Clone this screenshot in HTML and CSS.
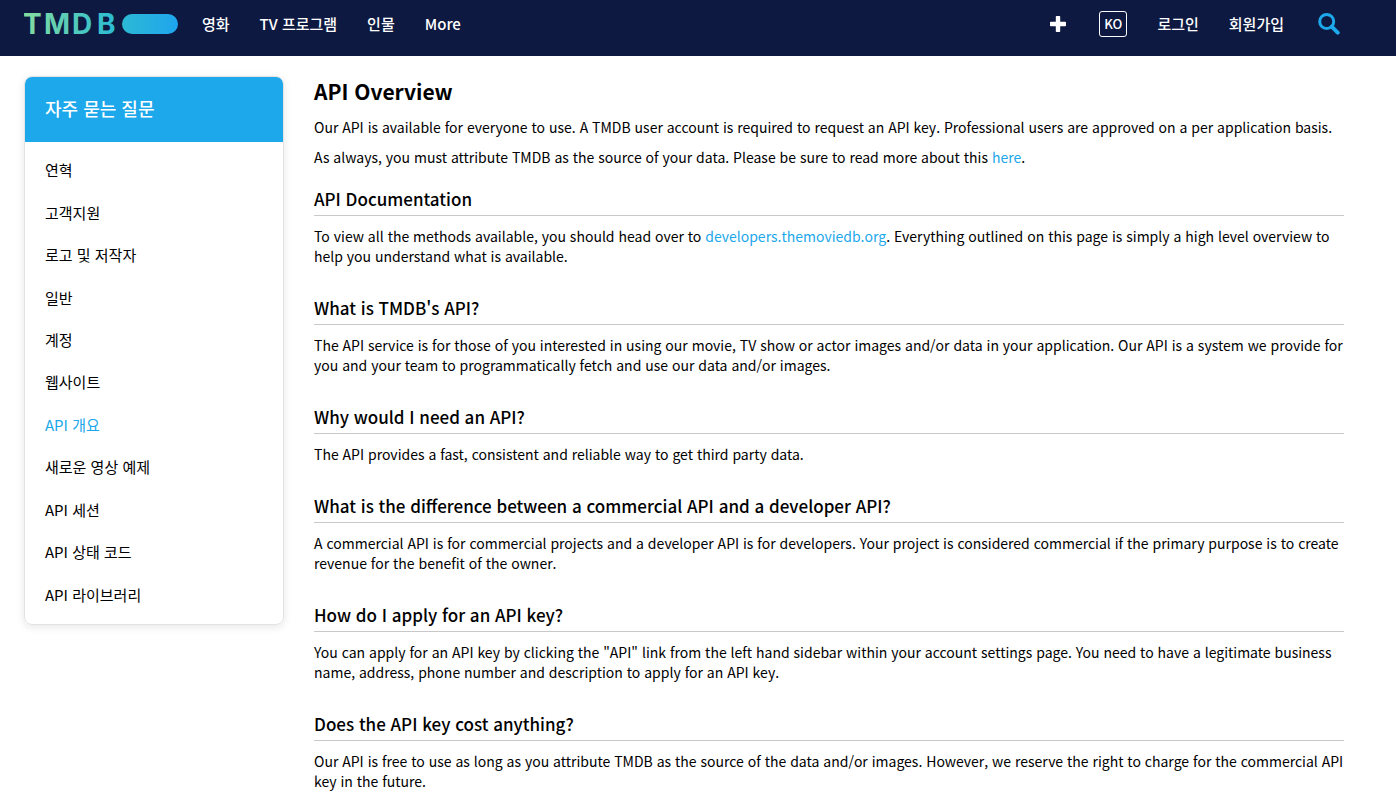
FILE: index.html
```html
<!DOCTYPE html>
<html lang="ko">
<head>
<meta charset="utf-8">
<meta name="viewport" content="width=device-width, initial-scale=1">
<title>API Overview — TMDB</title>
<link rel="stylesheet" href="styles.css">
</head>
<body>
<header class="header">
  <a class="logo" href="#" aria-label="TMDB">
    <svg width="154" height="40" viewBox="0 -10 154 40" aria-hidden="true">
      <defs>
        <linearGradient id="brand" gradientUnits="userSpaceOnUse" x1="0" y1="0" x2="154" y2="0">
          <stop offset="0" stop-color="#85dda0"/>
          <stop offset="0.56" stop-color="#2fbdd0"/>
          <stop offset="1" stop-color="#1ea5ee"/>
        </linearGradient>
      </defs>
      <text class="logo-text" x="-1 20 48 73" y="20" fill="url(#brand)">TMDB</text>
      <rect x="98" width="56" height="20" rx="10" fill="url(#brand)"/>
    </svg>
  </a>
  <nav class="nav" aria-label="Primary">
    <a href="#">영화</a>
    <a href="#">TV 프로그램</a>
    <a href="#">인물</a>
    <a href="#">More</a>
  </nav>
  <div class="actions">
    <button class="icon-button" type="button" aria-label="추가">
      <svg width="16" height="16" viewBox="0 0 16 16"><path d="M6.600 0h2.800q.8 0 .8.8v5h5q.8 0 .8.8v2.800q0 .8-.8.8h-5v5q0 .8-.8.8H6.600q-.8 0-.8-.8v-5h-5q-.8 0-.8-.8V6.600q0-.8.8-.8h5v-5q0-.8.8-.8z" fill="#fff"/></svg>
    </button>
    <button class="language" type="button">KO</button>
    <a href="#">로그인</a>
    <a href="#">회원가입</a>
    <button class="icon-button search" type="button" aria-label="검색">
      <svg width="22" height="22" viewBox="0 0 22 22" fill="none" stroke="#1ca8ea"><circle cx="8.700" cy="8.500" r="7" stroke-width="3"/><path d="M13.700 13.700l6 6" stroke-width="4" stroke-linecap="round"/></svg>
    </button>
  </div>
</header>
<div class="page">
  <aside class="panel">
    <h2 class="panel-title">자주 묻는 질문</h2>
    <ul class="panel-list">
      <li><a href="#">연혁</a></li>
      <li><a href="#">고객지원</a></li>
      <li><a href="#">로고 및 저작자</a></li>
      <li><a href="#">일반</a></li>
      <li><a href="#">계정</a></li>
      <li><a href="#">웹사이트</a></li>
      <li><a class="current" href="#" aria-current="page">API 개요</a></li>
      <li><a href="#">새로운 영상 예제</a></li>
      <li><a href="#">API 세션</a></li>
      <li><a href="#">API 상태 코드</a></li>
      <li><a href="#">API 라이브러리</a></li>
    </ul>
  </aside>
  <main class="content">
    <h1>API Overview</h1>
    <p>Our API is available for everyone to use. A TMDB user account is required to request an API key. Professional users are approved on a per application basis.</p>
    <p>As always, you must attribute TMDB as the source of your data. Please be sure to read more about this <a href="#">here</a>.</p>
    <section>
      <h3>API Documentation</h3>
      <p>To view all the methods available, you should head over to <a href="#">developers.themoviedb.org</a>. Everything outlined on this page is simply a high level overview to help you understand what is available.</p>
    </section>
    <section>
      <h3>What is TMDB's API?</h3>
      <p>The API service is for those of you interested in using our movie, TV show or actor images and/or data in your application. Our API is a system we provide for you and your team to programmatically fetch and use our data and/or images.</p>
    </section>
    <section>
      <h3>Why would I need an API?</h3>
      <p>The API provides a fast, consistent and reliable way to get third party data.</p>
    </section>
    <section>
      <h3>What is the difference between a commercial API and a developer API?</h3>
      <p>A commercial API is for commercial projects and a developer API is for developers. Your project is considered commercial if the primary purpose is to create revenue for the benefit of the owner.</p>
    </section>
    <section>
      <h3>How do I apply for an API key?</h3>
      <p>You can apply for an API key by clicking the "API" link from the left hand sidebar within your account settings page. You need to have a legitimate business name, address, phone number and description to apply for an API key.</p>
    </section>
    <section>
      <h3>Does the API key cost anything?</h3>
      <p>Our API is free to use as long as you attribute TMDB as the source of the data and/or images. However, we reserve the right to charge for the commercial API key in the future.</p>
    </section>
  </main>
</div>
</body>
</html>
```
FILE: styles.css
```css
* { box-sizing: border-box; }
body {
  margin: 0;
  background: #fff;
  color: #000;
  font-family: "Noto Sans CJK KR", sans-serif;
  font-size: 15px;
  line-height: 20px;
}
h1, h2, h3, p, ul { margin: 0; padding: 0; }
a { color: #1ca8ea; text-decoration: none; }
button { border: 0; padding: 0; background: none; font: inherit; cursor: pointer; }

.header {
  display: flex;
  align-items: center;
  height: 56px;
  padding: 0 56px 8px 24px;
  background: #0d1941;
  font-weight: 500;
}
.header a { color: #fff; }
.logo { display: flex; }
.logo-text { font-family: Inter, sans-serif; font-size: 28px; font-weight: 700; }
.nav, .actions { display: flex; align-items: center; gap: 30px; }
.nav { margin-left: 24px; }
.actions { margin-left: auto; }
.icon-button { display: flex; }
.icon-button.search { margin-left: 4px; }
.icon-button + .language { margin-left: 3px; }
.language {
  padding: 2px 4px;
  border: 1px solid #fff;
  border-radius: 3px;
  color: #fff;
  font-size: 13px;
  font-weight: 500;
}

.page {
  display: flex;
  align-items: flex-start;
  gap: 30px;
  padding: 20px 52px 14px 24px;
}
.panel {
  flex: 0 0 260px;
  border: 1px solid #e3e3e3;
  border-radius: 8px;
  box-shadow: 0 2px 8px rgba(0, 0, 0, 0.1);
  overflow: hidden;
}
.panel-title {
  padding: 19px 20px 21px;
  background: #1ca8ea;
  color: #fff;
  font-size: 18px;
  font-weight: 500;
  line-height: 25px;
}
.panel-list {
  display: grid;
  grid-auto-rows: 1fr;
  min-height: 482px;
  padding: 7px 0 8px;
  list-style: none;
}
.panel-list li { display: flex; align-items: center; }
.panel-list a { flex: 1; padding: 0 20px; color: #000; }
.panel-list a.current { color: #1ca8ea; }

.content { flex: 1; min-width: 0; font-size: 14px; }
h1 { font-size: 21px; font-weight: 700; line-height: 31px; }
.content p { margin-top: 10px; }
section { margin-top: 30px; }
p + section { margin-top: 20px; }
h3 {
  padding-bottom: 4px;
  border-bottom: 1px solid #c8c8c8;
  font-size: 17px;
  font-weight: 500;
  line-height: 24px;
}
```
